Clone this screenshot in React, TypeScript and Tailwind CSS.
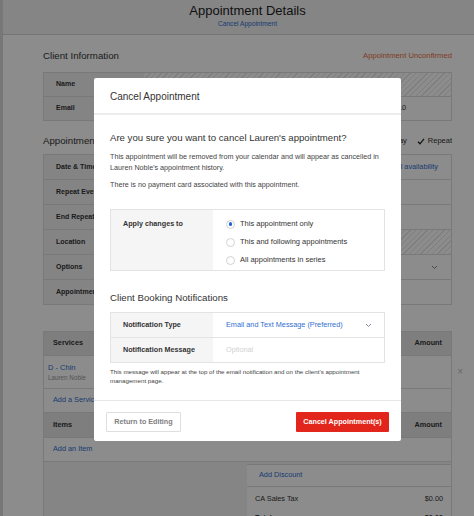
import React from "react";

const hatch =
  "bg-[repeating-linear-gradient(135deg,#e6e6e6_0_1px,#ffffff_1px_4px)]";

const Chevron = ({ className = "" }: { className?: string }) => (
  <svg width="7" height="5" viewBox="0 0 7 5" className={className}>
    <polyline points="1,1 3.5,3.5 6,1" fill="none" stroke="currentColor" strokeWidth="1" />
  </svg>
);

const Check = () => (
  <svg width="8" height="7" viewBox="0 0 8 7">
    <polyline points="1,3.8 3,5.8 7,0.8" fill="none" stroke="#222" strokeWidth="1.3" />
  </svg>
);

const apptRows = [
  { label: "Date & Time", right: <span className="text-[#2f6fd1]">Show all availability</span> },
  { label: "Repeat Every" },
  { label: "End Repeat" },
  { label: "Location", hatched: true },
  { label: "Options", right: <Chevron className="text-[#888]" /> },
  { label: "Appointment Notes" },
];

function BackgroundPage() {
  return (
    <div className="h-full border-l-[3px] border-[#d9d9d9]">
      <header className="flex h-[35px] flex-col items-center border-b border-[#d4d4d4] bg-[#f3f3f3] pl-[18px] pt-[3px]">
        <h1 className="text-[13px] leading-[15px] text-[#222]">Appointment Details</h1>
        <a className="mt-[1px] text-[6.6px] leading-[9px] text-[#2f6fd1]">Cancel Appointment</a>
      </header>

      <main className="ml-[40px] mr-[22px]">
        {/* Client information */}
        <div className="mt-[15px] flex items-center justify-between">
          <h2 className="text-[9.7px] leading-[12px] text-[#333]">Client Information</h2>
          <span className="text-[7.7px] text-[#e8703a]">Appointment Unconfirmed</span>
        </div>
        <div className="mt-[10px] border border-[#dcdcdc] text-[7px]">
          <div className="flex h-[24px] border-b border-[#dcdcdc]">
            <div className="flex w-[100px] items-center bg-[#f0f0f0] pl-[12px] font-bold">Name</div>
            <div className={`flex-1 ${hatch}`} />
          </div>
          <div className="flex h-[23px]">
            <div className="flex w-[100px] items-center bg-[#f0f0f0] pl-[12px] font-bold">Email</div>
            <div className="flex flex-1 items-center justify-end pr-[45px] text-[7.3px]">(415) 555-0110</div>
          </div>
        </div>

        {/* Appointment */}
        <div className="mt-[14px] flex items-center justify-between">
          <h2 className="text-[9.7px] leading-[12px] text-[#333]">Appointment</h2>
          <div className="flex items-center gap-[3px] text-[7.5px] text-[#333]">
            <span className="mr-[7px]">All Day</span>
            <Check />
            <span>Repeat</span>
          </div>
        </div>
        <div className="mt-[7px] border border-[#dcdcdc] text-[7px]">
          {apptRows.map((r, i) => (
            <div
              key={r.label}
              className={`flex ${i < apptRows.length - 1 ? "h-[25px] border-b border-[#dcdcdc]" : "h-[24px]"}`}
            >
              <div className="flex w-[100px] items-center bg-[#f0f0f0] pl-[12px] font-bold">{r.label}</div>
              <div
                className={`flex flex-1 items-center justify-end pr-[13px] text-[7.3px] ${r.hatched ? hatch : ""}`}
              >
                {r.right}
              </div>
            </div>
          ))}
        </div>

        {/* Services */}
        <div className="mt-[26px] border-x border-t border-[#dcdcdc] text-[7.3px]">
          <div className="flex h-[24px] items-center justify-between border-b border-[#dcdcdc] bg-[#e6e6e6] px-[9px] font-bold">
            <span>Services</span>
            <span>Amount</span>
          </div>
          <div className="relative flex h-[33px] flex-col justify-center border-b border-[#dcdcdc] pl-[4px]">
            <span className="text-[7.5px] leading-[10px] text-[#2f6fd1]">D - Chin</span>
            <span className="text-[6.3px] leading-[9px] text-[#999]">Lauren Noble</span>
            <span className="absolute right-[-12px] top-[8px] text-[10px] text-[#bbb]">×</span>
          </div>
          <div className="flex h-[24px] items-center border-b border-[#dcdcdc] pl-[9px] text-[#2f6fd1]">
            Add a Service
          </div>
          <div className="flex h-[25px] items-center justify-between border-b border-[#dcdcdc] bg-[#e6e6e6] px-[9px] font-bold">
            <span>Items</span>
            <span>Amount</span>
          </div>
          <div className="flex h-[24px] items-center border-b border-[#dcdcdc] pl-[9px] text-[#2f6fd1]">
            Add an Item
          </div>
          <div className="flex h-[80px] bg-[#f2f2f2]">
            <div className="flex-1" />
            <div className="mt-[2px] w-[204px] bg-white">
              <div className="flex h-[23px] items-center border-y border-[#dcdcdc] pl-[12px] text-[#2f6fd1]">
                Add Discount
              </div>
              <div className="flex h-[24px] items-center justify-between px-[8px]">
                <span>CA Sales Tax</span>
                <span>$0.00</span>
              </div>
              <div className="flex h-[14px] items-center justify-between px-[8px] font-bold">
                <span>Total</span>
                <span>$0.00</span>
              </div>
            </div>
          </div>
        </div>
      </main>
    </div>
  );
}

function Radio({ checked, label }: { checked?: boolean; label: string }) {
  return (
    <div className="flex h-[18px] items-center">
      <span className="flex h-[9px] w-[9px] items-center justify-center rounded-full border border-[#d2d2d2] bg-white">
        {checked && <span className="h-[3.5px] w-[3.5px] rounded-full bg-[#1f5fe0]" />}
      </span>
      <span className="ml-[5px] text-[7.5px] text-[#333]">{label}</span>
    </div>
  );
}

function CancelModal() {
  return (
    <div className="absolute left-[94px] top-[78px] flex h-[363px] w-[307px] flex-col rounded-[2px] bg-white text-[#333]">
      <div className="flex h-[37px] items-center border-b-2 border-[#ececec] px-[16px] pt-[1px] text-[10px]">
        Cancel Appointment
      </div>

      <div className="flex-1 px-[16px] pt-[16px]">
        <p className="text-[9.6px] leading-[13px] text-[#333]">
          Are you sure you want to cancel Lauren's appointment?
        </p>
        <p className="mt-[7px] text-[7.2px] leading-[11px] text-[#444]">
          This appointment will be removed from your calendar and will appear as cancelled in Lauren
          Noble's appointment history.
        </p>
        <p className="mt-[6px] text-[7.2px] leading-[11px] text-[#444]">
          There is no payment card associated with this appointment.
        </p>

        <div className="mt-[19px] flex border border-[#e3e3e3]">
          <div className="w-[102px] bg-[#f5f5f5] pl-[12px] pt-[9px] text-[7.2px] font-bold leading-[10px]">
            Apply changes to
          </div>
          <div className="pb-[1px] pl-[13px] pt-[5px]">
            <Radio checked label="This appointment only" />
            <Radio label="This and following appointments" />
            <Radio label="All appointments in series" />
          </div>
        </div>

        <h3 className="mt-[20px] text-[9.7px] leading-[13px] text-[#333]">Client Booking Notifications</h3>

        <div className="mt-[8px] border border-[#e3e3e3] text-[7.2px]">
          <div className="flex h-[25px] border-b border-[#e3e3e3]">
            <div className="flex w-[102px] items-center bg-[#f5f5f5] pl-[12px] font-bold">Notification Type</div>
            <div className="flex flex-1 items-center justify-between pl-[13px] pr-[12px] text-[7.3px] text-[#2f6fd1]">
              <span>Email and Text Message (Preferred)</span>
              <Chevron className="text-[#7a8aa3]" />
            </div>
          </div>
          <div className="flex h-[24px]">
            <div className="flex w-[102px] items-center bg-[#f5f5f5] pl-[12px] font-bold">Notification Message</div>
            <div className="flex flex-1 items-center pl-[13px] text-[7.3px] text-[#d0d0d0]">Optional</div>
          </div>
        </div>
        <p className="mt-[4px] text-[6.2px] leading-[9px] text-[#444]">
          This message will appear at the top of the email notification and on the client's appointment
          management page.
        </p>
      </div>

      <div className="flex items-center justify-between border-t border-[#e6e6e6] px-[12px] pb-[9px] pt-[11px]">
        <button className="flex h-[20px] w-[75px] items-center justify-center rounded-[1px] border border-[#dedede] bg-white text-[7.2px] font-bold text-[#808080]">
          Return to Editing
        </button>
        <button className="flex h-[20px] w-[93px] items-center justify-center rounded-[1px] bg-[#e3261c] text-[7.2px] font-bold text-white">
          Cancel Appointment(s)
        </button>
      </div>
    </div>
  );
}

export default function App() {
  return (
    <div className="relative h-[516px] w-[474px] overflow-hidden bg-white font-['Liberation_Sans',Arial,sans-serif] text-[#333]">
      <BackgroundPage />
      <div className="absolute inset-0 bg-black/45" />
      <CancelModal />
    </div>
  );
}
